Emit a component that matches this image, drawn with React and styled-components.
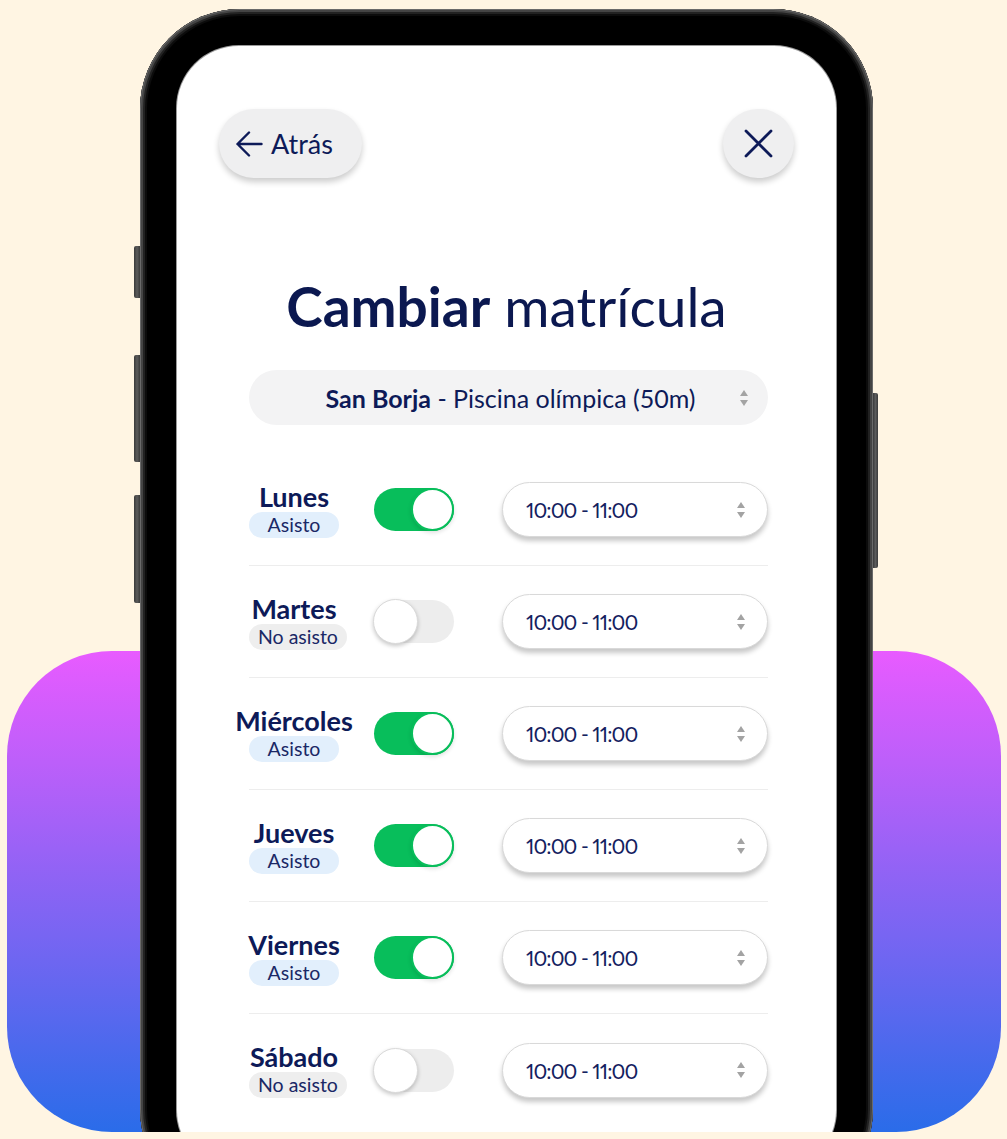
import React from "react";
import styled, { createGlobalStyle } from "styled-components";

const GlobalStyle = createGlobalStyle`
  html, body { margin: 0; padding: 0; background: #FFF5E3; }
  body { font-family: Lato, "Noto Sans", sans-serif; -webkit-font-smoothing: antialiased; }
  * { box-sizing: border-box; }
`;

const NAVY = "#0D1A58";

const Stage = styled.main`
  display: grid;
  grid-template-rows: 1132px;
  grid-template-columns: 1007px;
  width: 1007px;
  height: 1132px;
  overflow: hidden;
`;

const Backdrop = styled.div`
  grid-area: 1 / 1;
  align-self: end;
  height: 481px;
  margin: 0 6px 0 7px;
  border-radius: 105px;
  background: linear-gradient(180deg, #E85BFF 0%, #2A6CE9 100%);
`;

const Device = styled.div`
  grid-area: 1 / 1;
  align-self: start;
  justify-self: start;
  display: flex;
  margin: 9px 0 0 134px;
`;

const Rail = styled.div`
  display: flex;
  flex-direction: column;
  width: ${(p) => p.$w}px;
  padding-top: ${(p) => p.$top}px;
`;

const HwButton = styled.span`
  display: block;
  height: ${(p) => p.$h}px;
  margin-top: ${(p) => p.$gap || 0}px;
  background: linear-gradient(90deg, #3a3a3a, #5c5c5c 50%, #3a3a3a);
  border-radius: ${(p) => (p.$right ? "0 2px 2px 0" : "2px 0 0 2px")};
`;

const Phone = styled.div`
  width: 733px;
  height: 1200px;
  padding: 37px;
  border-radius: 100px;
  background: #000;
  box-shadow: inset 0 0 0 1px #6a6a6a, inset 0 0 0 3px #444, inset 0 0 0 5px #222, inset 0 0 0 7px #0c0c0c;
`;

const Screen = styled.div`
  height: 100%;
  background: #fff;
  border-radius: 62px;
  box-shadow: 0 0 0 1px #9a9a9a;
  display: flex;
  flex-direction: column;
`;

const TopBar = styled.div`
  display: flex;
  justify-content: space-between;
  align-items: center;
  padding: 63px 42px 0 42px;
`;

const PillButton = styled.button`
  display: flex;
  align-items: center;
  justify-content: ${(p) => (p.$round ? "center" : "flex-start")};
  gap: 8px;
  width: ${(p) => (p.$round ? 71 : 143)}px;
  height: 69px;
  padding: ${(p) => (p.$round ? 0 : "0 0 0 17px")};
  border: none;
  border-radius: 35px;
  background: #EFEFF0;
  box-shadow: 0 4px 6px rgba(0, 0, 0, 0.2);
  color: ${NAVY};
  font-family: Lato, "Noto Sans", sans-serif;
  font-size: 27px;
  cursor: pointer;
`;

const Title = styled.h1`
  margin: 101px 0 0;
  text-align: center;
  font-size: 55px;
  line-height: 1;
  font-weight: 400;
  color: #0B1850;
  strong { font-weight: 700; }
`;

const Content = styled.div`
  display: flex;
  flex-direction: column;
  padding: 0 68px 0 72px;
`;

const SitePicker = styled.div`
  display: grid;
  grid-template-columns: 1fr auto 1fr;
  align-items: center;
  height: 55px;
  margin-top: 36px;
  padding: 0 20px 0 24px;
  border-radius: 28px;
  background: #F3F3F4;
  color: ${NAVY};
  font-size: 25px;
  b { font-weight: 700; }
  & > span:first-child { grid-column: 2; }
`;

const Spinner = styled.span`
  justify-self: end;
  display: flex;
  flex-direction: column;
  gap: 4px;
`;

const Tri = styled.span`
  width: 0;
  height: 0;
  border-left: 4.5px solid transparent;
  border-right: 4.5px solid transparent;
  ${(p) => (p.$down ? "border-top" : "border-bottom")}: 6px solid #A3A3A3;
`;

const Rows = styled.div`
  margin-top: 29px;
  display: flex;
  flex-direction: column;
`;

const Row = styled.div`
  display: flex;
  align-items: center;
  height: 112px;
  border-bottom: 1px solid #EDEDED;
  &:last-child { border-bottom: none; }
`;

const DayCell = styled.div`
  width: 90px;
  display: flex;
  flex-direction: column;
  align-items: center;
`;

const DayName = styled.span`
  font-size: 27px;
  line-height: 30px;
  font-weight: 700;
  color: ${NAVY};
  white-space: nowrap;
`;

const Badge = styled.span`
  align-self: flex-start;
  min-width: 90px;
  height: 26px;
  padding: 0 9px;
  border-radius: 13px;
  background: ${(p) => (p.$on ? "#E2EFFC" : "#EEEEEE")};
  color: #1A2866;
  font-size: 19.5px;
  line-height: 26px;
  text-align: center;
  white-space: nowrap;
`;

const Track = styled.span`
  display: flex;
  align-items: center;
  justify-content: ${(p) => (p.$on ? "flex-end" : "flex-start")};
  width: 80px;
  height: 43px;
  margin-left: 35px;
  border-radius: 22px;
  background: ${(p) => (p.$on ? "#08BE5B" : "#EDEDED")};
`;

const Knob = styled.span`
  width: ${(p) => (p.$on ? 43 : 45)}px;
  height: ${(p) => (p.$on ? 43 : 45)}px;
  margin-left: ${(p) => (p.$on ? 0 : -1)}px;
  border-radius: 50%;
  background: #fff;
  border: ${(p) => (p.$on ? "2px solid #08BE5B" : "1px solid #DADADA")};
  box-shadow: 0 2px 4px rgba(0, 0, 0, ${(p) => (p.$on ? 0.12 : 0.22)});
`;

const TimeSelect = styled.div`
  display: flex;
  align-items: center;
  justify-content: space-between;
  width: 266px;
  height: 55px;
  margin-left: 48px;
  padding: 0 22px 0 23px;
  border: 1px solid #D9D9D9;
  border-radius: 28px;
  background: #fff;
  box-shadow: 0 4px 5px rgba(0, 0, 0, 0.22);
  color: #14225F;
  font-size: 21px;
  font-variant-numeric: proportional-nums;
  letter-spacing: -0.9px;
`;

const ArrowLeft = () => (
  <svg width="27" height="26" viewBox="0 0 27 26" fill="none" stroke={NAVY} strokeWidth="2.4" strokeLinecap="round" strokeLinejoin="round">
    <path d="M13 1.5 L1.5 13 L13 24.5 M1.5 13 H25.5" />
  </svg>
);

const CloseIcon = () => (
  <svg width="29" height="29" viewBox="0 0 29 29" fill="none" stroke={NAVY} strokeWidth="2.8" strokeLinecap="round">
    <path d="M2 2 L27 27 M27 2 L2 27" />
  </svg>
);

const days = [
  { name: "Lunes", on: true },
  { name: "Martes", on: false },
  { name: "Miércoles", on: true },
  { name: "Jueves", on: true },
  { name: "Viernes", on: true },
  { name: "Sábado", on: false },
];

const Arrows = () => (
  <Spinner>
    <Tri />
    <Tri $down />
  </Spinner>
);

export default function App() {
  return (
    <>
      <GlobalStyle />
      <Stage>
        <Backdrop />
        <Device>
          <Rail $w={6} $top={237}>
            <HwButton $h={52} />
            <HwButton $h={107} $gap={57} />
            <HwButton $h={108} $gap={33} />
          </Rail>
          <Phone>
            <Screen>
              <TopBar>
                <PillButton>
                  <ArrowLeft />
                  Atrás
                </PillButton>
                <PillButton $round aria-label="Cerrar">
                  <CloseIcon />
                </PillButton>
              </TopBar>
              <Title>
                <strong>Cambiar</strong> matrícula
              </Title>
              <Content>
                <SitePicker>
                  <span>
                    <b>San Borja</b> - Piscina olímpica (50m)
                  </span>
                  <Arrows />
                </SitePicker>
                <Rows>
                  {days.map((d) => (
                    <Row key={d.name}>
                      <DayCell>
                        <DayName>{d.name}</DayName>
                        <Badge $on={d.on}>{d.on ? "Asisto" : "No asisto"}</Badge>
                      </DayCell>
                      <Track $on={d.on}>
                        <Knob $on={d.on} />
                      </Track>
                      <TimeSelect>
                        <span>10:00 - 11:00</span>
                        <Arrows />
                      </TimeSelect>
                    </Row>
                  ))}
                </Rows>
              </Content>
            </Screen>
          </Phone>
          <Rail $w={5} $top={384}>
            <HwButton $h={175} $right />
          </Rail>
        </Device>
      </Stage>
    </>
  );
}
